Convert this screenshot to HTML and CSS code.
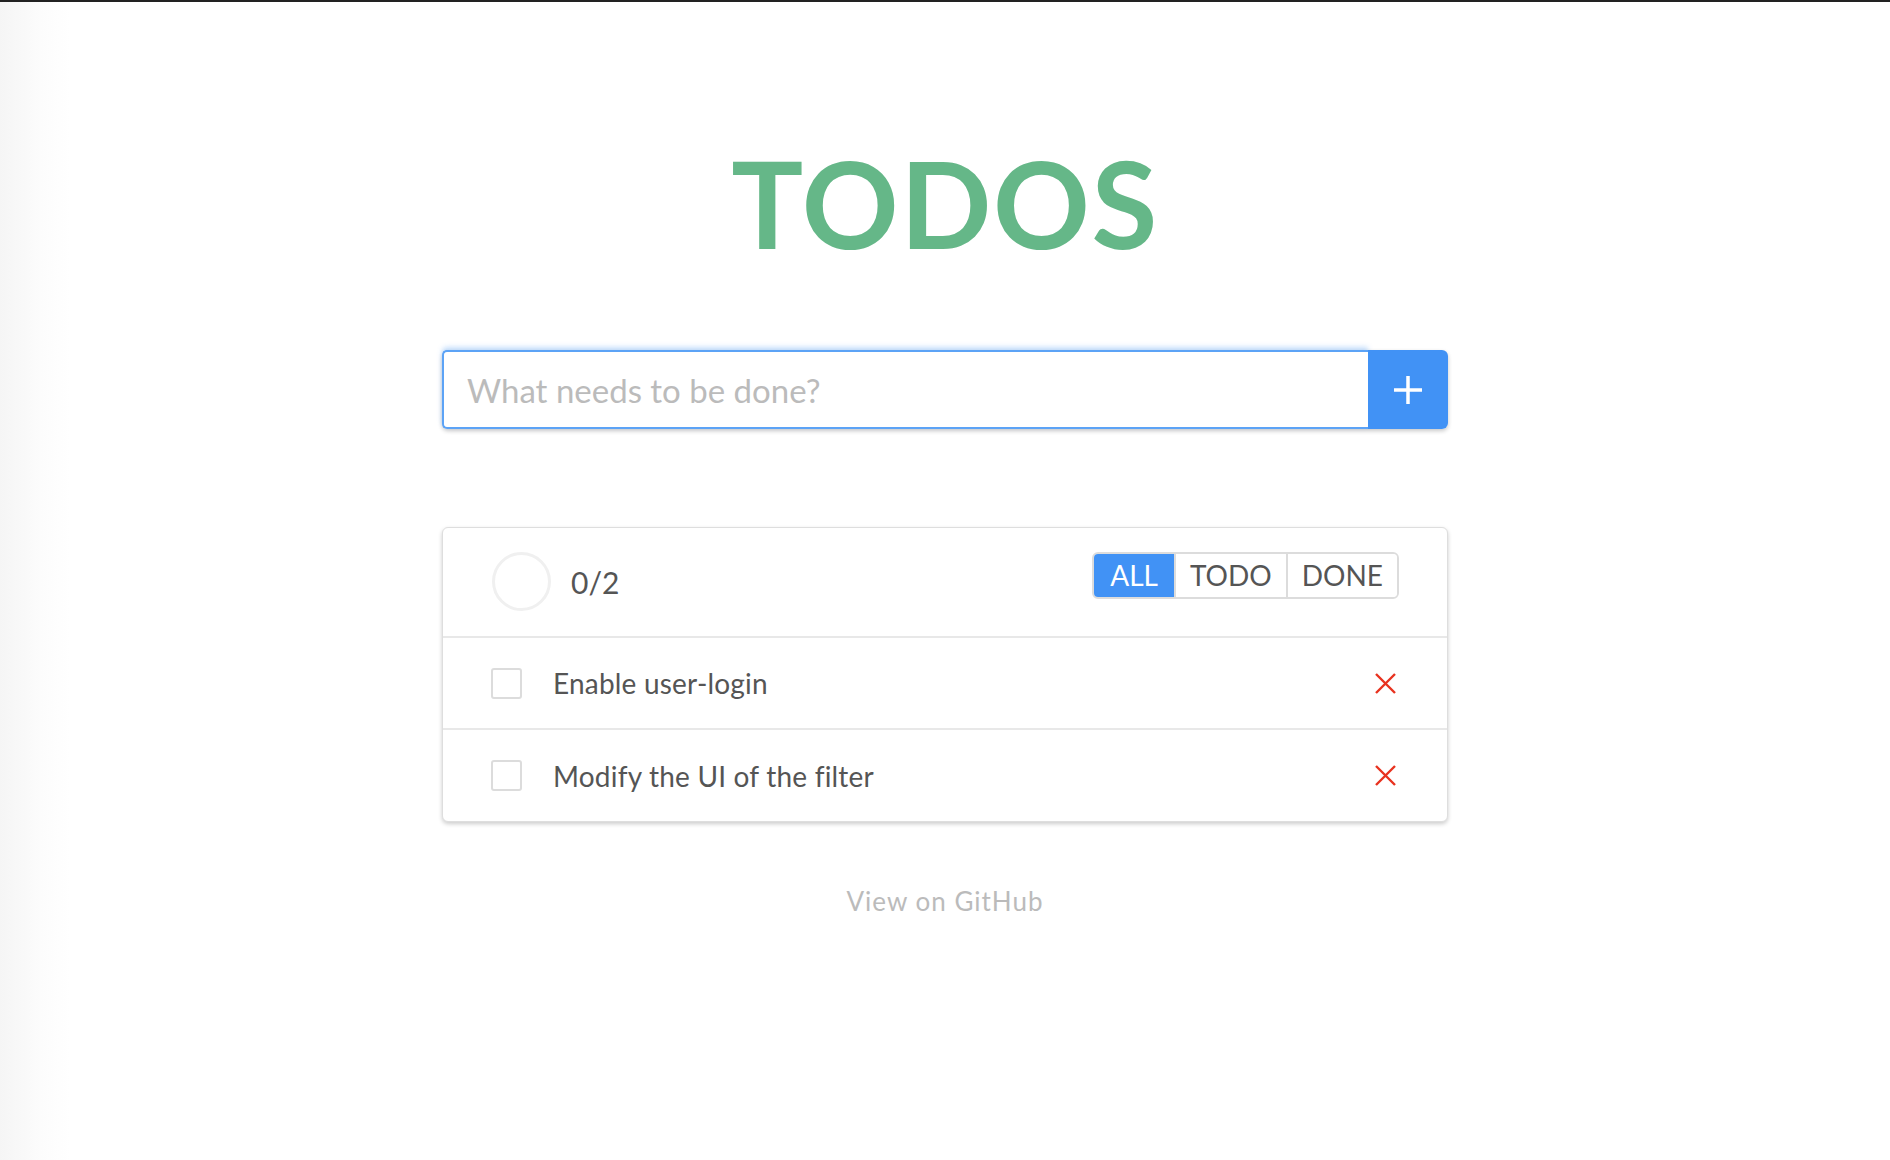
FILE: index.html
```html
<!DOCTYPE html>
<html lang="en">
<head>
<meta charset="utf-8">
<title>Todos</title>
<link rel="stylesheet" href="styles.css">
</head>
<body>
<main class="app">
  <h1 class="title">TODOS</h1>
  <form class="add">
    <input class="add-input" type="text" placeholder="What needs to be done?">
    <button class="add-btn" type="button" aria-label="Add">
      <svg width="30" height="30" viewBox="0 0 30 30"><path d="M15 1v28M1 15h28" stroke="#fff" stroke-width="3.5" fill="none"/></svg>
    </button>
  </form>
  <section class="card">
    <header class="card-head">
      <div class="progress">
        <span class="ring"></span>
        <span class="count">0/2</span>
      </div>
      <div class="filters">
        <button class="filter active" type="button">ALL</button>
        <button class="filter" type="button">TODO</button>
        <button class="filter" type="button">DONE</button>
      </div>
    </header>
    <ul class="list">
      <li class="item">
        <span class="check"></span>
        <span class="label">Enable user-login</span>
        <svg class="del" width="21" height="21" viewBox="0 0 21 21"><path d="M1 1l19 19M20 1L1 20" stroke="#e8321f" stroke-width="2.4" fill="none"/></svg>
      </li>
      <li class="item">
        <span class="check"></span>
        <span class="label">Modify the UI of the filter</span>
        <svg class="del" width="21" height="21" viewBox="0 0 21 21"><path d="M1 1l19 19M20 1L1 20" stroke="#e8321f" stroke-width="2.4" fill="none"/></svg>
      </li>
    </ul>
  </section>
  <a class="github" href="#">View on GitHub</a>
</main>
</body>
</html>
```

FILE: styles.css
```css
html, body {
  margin: 0;
  padding: 0;
}
body {
  min-height: 1158px;
  border-top: 2px solid #222;
  background: linear-gradient(to right, #f5f5f5 0, #fcfcfc 40px, #fff 70px);
  font-family: "Lato", "Open Sans", sans-serif;
  color: #555;
}
.app {
  display: flex;
  flex-direction: column;
  align-items: center;
}
.title {
  margin: 141px 0 0;
  font-size: 120px;
  line-height: 120px;
  font-weight: 700;
  color: #65b788;
  letter-spacing: 1.5px;
}
.add {
  margin-top: 87px;
  width: 1006px;
  height: 79px;
  display: flex;
  border-radius: 6px;
  box-shadow: 0 2px 4px rgba(0,0,0,0.22);
}
.add-input {
  flex: 1;
  min-width: 0;
  box-sizing: border-box;
  height: 79px;
  margin: 0;
  padding: 0 0 0 23px;
  border: 2px solid #5ca3f6;
  border-right: none;
  border-radius: 5px 0 0 5px;
  box-shadow: 0 -3px 5px rgba(90,160,246,0.35);
  font-family: inherit;
  font-size: 33px;
  color: #555;
  outline: none;
}
.add-input::placeholder {
  color: #bbb;
}
.add-btn {
  width: 80px;
  height: 79px;
  margin: 0;
  padding: 0;
  border: none;
  border-radius: 0 6px 6px 0;
  background: #4192f5;
  display: flex;
  align-items: center;
  justify-content: center;
}
.card {
  margin-top: 98px;
  width: 1006px;
  box-sizing: border-box;
  background: #fff;
  border: 1px solid #dedede;
  border-radius: 6px;
  box-shadow: 0 2px 4px rgba(0,0,0,0.2);
}
.card-head {
  height: 110px;
  box-sizing: border-box;
  padding: 24px 48px 0 49px;
  border-bottom: 2px solid #e8e8e8;
  display: flex;
  justify-content: space-between;
  align-items: flex-start;
}
.progress {
  display: flex;
  align-items: center;
  gap: 20px;
}
.ring {
  width: 59px;
  height: 59px;
  box-sizing: border-box;
  border: 3px solid #f0f0f0;
  border-radius: 50%;
}
.count {
  font-size: 30px;
  color: #555;
}
.filters {
  display: flex;
  height: 47px;
  box-sizing: border-box;
  border: 2px solid #dcdcdc;
  border-radius: 6px;
  overflow: hidden;
}
.filter {
  margin: 0;
  padding: 0 14px;
  border: none;
  border-left: 2px solid #dcdcdc;
  background: #fff;
  font-family: inherit;
  font-size: 28px;
  color: #555;
  line-height: 43px;
}
.filter:first-child {
  border-left: none;
}
.filter.active {
  background: #4192f5;
  color: #fff;
  padding: 0 16px;
}
.list {
  list-style: none;
  margin: 0;
  padding: 0;
}
.item {
  height: 90px;
  display: flex;
  align-items: center;
  padding: 0 51px 0 48px;
}
.item + .item {
  border-top: 2px solid #e8e8e8;
  height: 91px;
}
.check {
  width: 31px;
  height: 31px;
  box-sizing: border-box;
  border: 2px solid #dcdcdc;
  border-radius: 3px;
  flex: none;
}
.label {
  flex: 1;
  margin-left: 31px;
  font-size: 28px;
  letter-spacing: 0.2px;
  color: #555;
}
.del {
  flex: none;
}
.github {
  margin-top: 64px;
  font-size: 26px;
  line-height: 30px;
  letter-spacing: 1px;
  color: #bbb;
  text-decoration: none;
}
```
